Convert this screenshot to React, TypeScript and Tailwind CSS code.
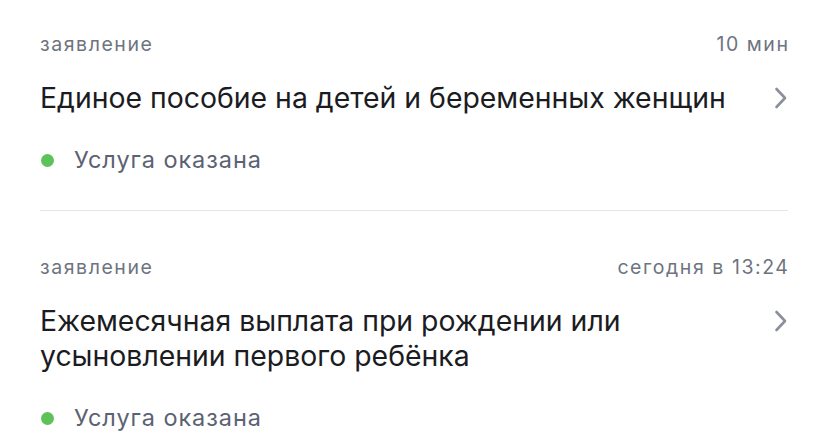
interface Application {
    kind: string;
    time: string;
    title: string;
    status: string;
}

const items: Application[] = [
    {
        kind: 'заявление',
        time: '10 мин',
        title: 'Единое пособие на детей и беременных женщин',
        status: 'Услуга оказана',
    },
    {
        kind: 'заявление',
        time: 'сегодня в 13:24',
        title: 'Ежемесячная выплата при рождении или усыновлении первого ребёнка',
        status: 'Услуга оказана',
    },
];

const Chevron = () => (
    <svg width="14" height="22" viewBox="0 0 14 22" fill="none" className="shrink-0 mt-[7px]">
        <polyline points="2.5,2 11,11 2.5,20" stroke="#8a8f9b" strokeWidth="2.6" strokeLinecap="round" strokeLinejoin="round" />
    </svg>
);

const App = () => {
    return (
        <div className="min-h-screen bg-white px-10 font-['Inter','Noto_Sans',sans-serif]">
            {items.map((item, idx) => (
                <div key={idx}>
                    {idx > 0 && <div className="h-px bg-[#e4e6ea]" />}
                    <div className={idx === 0 ? 'pt-8 pb-[35px]' : 'pt-[44px]'}>
                        {/* Meta row */}
                        <div className="flex justify-between text-[19.5px] leading-[24px] tracking-[0.08em] text-[#6e7380]">
                            <span>{item.kind}</span>
                            <span className="-mr-[0.08em]">{item.time}</span>
                        </div>

                        {/* Title */}
                        <div className="mt-[24px] flex items-start justify-between gap-6">
                            <p className="flex-1 text-[28.4px] leading-[35px] text-[#1b1c1f]">{item.title}</p>
                            <Chevron />
                        </div>

                        {/* Status */}
                        <div className="mt-[30px] flex items-center gap-[20px] text-[23.5px] leading-[30px] tracking-[0.04em] text-[#5b6273]">
                            <span className="ml-[1px] w-[13px] h-[13px] rounded-full bg-[#5ec25b]" />
                            <span>{item.status}</span>
                        </div>
                    </div>
                </div>
            ))}
        </div>
    );
};

export default App;
